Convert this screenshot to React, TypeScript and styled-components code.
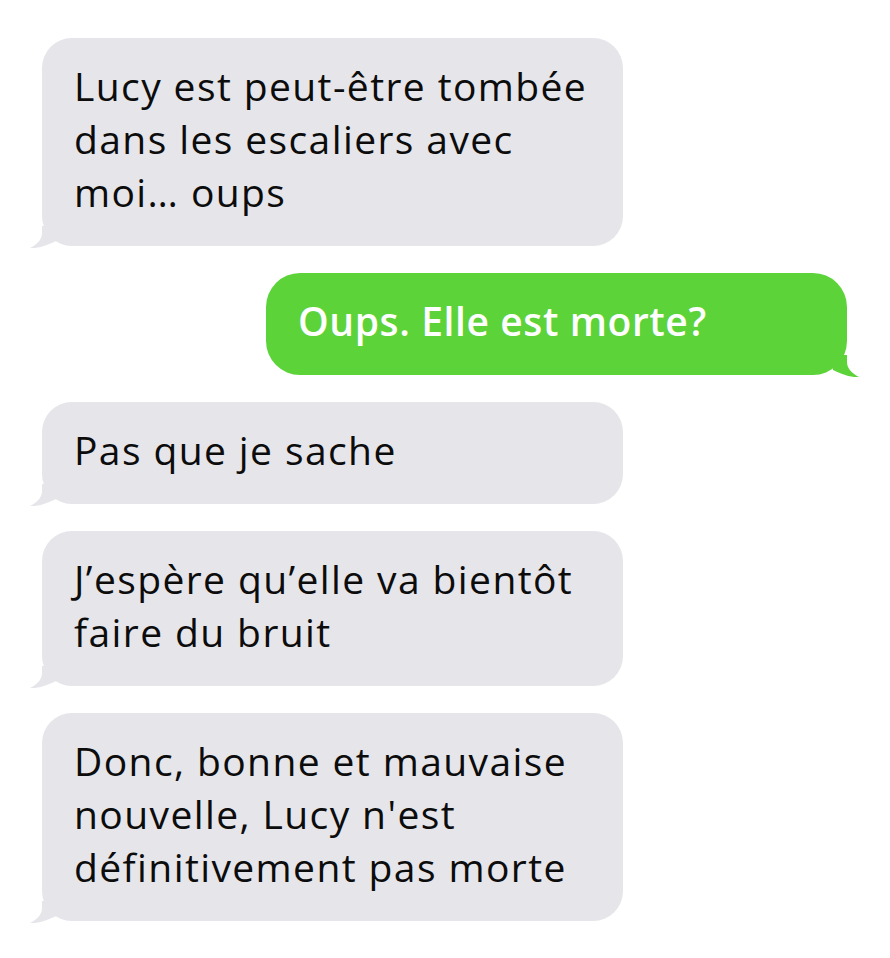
import React from 'react';
import styled, { createGlobalStyle } from 'styled-components';

const GlobalStyle = createGlobalStyle`
  html, body {
    margin: 0;
    padding: 0;
    background: #ffffff;
  }
  body {
    font-family: 'Open Sans', 'Noto Sans', 'DejaVu Sans', sans-serif;
  }
`;

type Side = 'left' | 'right';

interface IMessage {
  side: Side;
  lines: string[];
}

const messages: IMessage[] = [
  { side: 'left', lines: ['Lucy est peut-être tombée', 'dans les escaliers avec', 'moi… oups'] },
  { side: 'right', lines: ['Oups. Elle est morte?'] },
  { side: 'left', lines: ['Pas que je sache'] },
  { side: 'left', lines: ['J’espère qu’elle va bientôt', 'faire du bruit'] },
  {
    side: 'left',
    lines: ['Donc, bonne et mauvaise', "nouvelle, Lucy n'est", 'définitivement pas morte'],
  },
];

const colors = {
  left: '#e5e5ea',
  right: '#5dd33a',
};

/**
 * The little curled tail under the bottom corner of a bubble.
 */
const BubbleTail = ({ side }: { side: Side }) => (
  <StyledTail side={side} viewBox="0 0 33 24" width={33} height={24} aria-hidden>
    <path
      d="M13 0 L13 7 C13 13 9 18 1 22 C9 22.6 18 19.5 27 15 L27 0 Z"
      fill={colors[side]}
    />
  </StyledTail>
);

const Bubble = ({ side, lines }: IMessage) => (
  <StyledBubble side={side}>
    {lines.map(line => (
      <Line key={line}>{line}</Line>
    ))}
    <BubbleTail side={side} />
  </StyledBubble>
);

export default function App() {
  return (
    <>
      <GlobalStyle />
      <Thread>
        {messages.map((m, i) => (
          <Bubble key={i} side={m.side} lines={m.lines} />
        ))}
      </Thread>
    </>
  );
}

const Thread = styled.div`
  width: 890px;
  min-height: 958px;
  box-sizing: border-box;
  padding: 38px 43px 0 42px;
  display: flex;
  flex-direction: column;
  gap: 27px;
`;

const StyledBubble = styled.div<{ side: Side }>`
  position: relative;
  width: 581px;
  box-sizing: border-box;
  padding: 21px 30px 28px 32px;
  align-self: ${({ side }) => (side === 'left' ? 'flex-start' : 'flex-end')};
  background: ${({ side }) => colors[side]};
  border-radius: ${({ side }) => (side === 'left' ? '30px' : '34px')};
  color: ${({ side }) => (side === 'left' ? '#0c0c0c' : '#ffffff')};
  font-size: 39px;
  font-weight: ${({ side }) => (side === 'left' ? 400 : 600)};
  line-height: 53px;
  letter-spacing: ${({ side }) => (side === 'left' ? '1.4px' : '0.6px')};
`;

const Line = styled.div`
  white-space: nowrap;
`;

const StyledTail = styled.svg<{ side: Side }>`
  position: absolute;
  bottom: -4px;
  ${({ side }) => (side === 'left' ? 'left: -13px;' : 'right: -13px; transform: scaleX(-1);')}
`;
